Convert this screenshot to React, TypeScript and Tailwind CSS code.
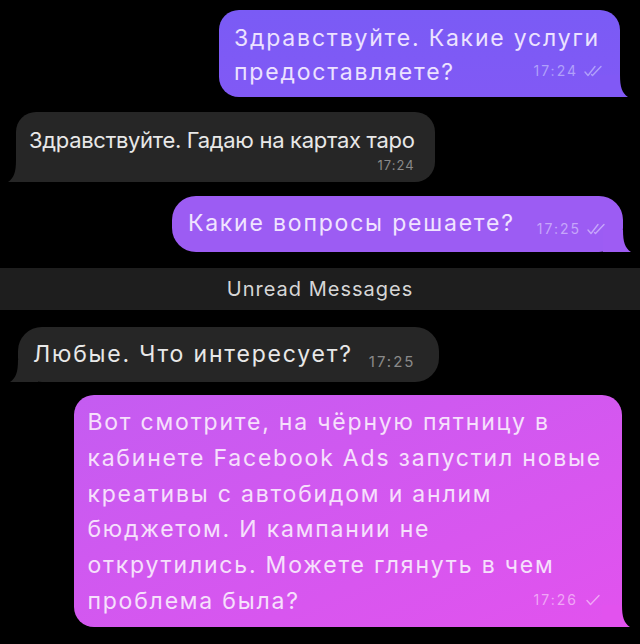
import React from 'react';

const font = { fontFamily: 'Inter, "Noto Sans", sans-serif' };

function Checks({ double }: { double?: boolean }) {
  return (
    <svg width="20" height="12" viewBox="0 0 20 12" fill="none" className="ml-1.5">
      {double ? (
        <>
          <path d="M1 7l3 3.5L11 1.5" stroke="currentColor" strokeWidth="1.4" strokeLinecap="round" strokeLinejoin="round" />
          <path d="M7.5 9.5l1 1L17 1.5" stroke="currentColor" strokeWidth="1.4" strokeLinecap="round" strokeLinejoin="round" />
        </>
      ) : (
        <path d="M3 6.5l3.5 4L15 1.5" stroke="currentColor" strokeWidth="1.4" strokeLinecap="round" strokeLinejoin="round" />
      )}
    </svg>
  );
}

// little swoosh at the bottom corner of a bubble
function Tail({ side, color }: { side: 'left' | 'right'; color: string }) {
  if (side === 'right') {
    return (
      <svg width="28" height="22" viewBox="0 0 28 22" className="absolute -right-[8px] bottom-0">
        <path d="M0 0H20C20 12 22 18 28 22H0Z" fill={color} />
      </svg>
    );
  }
  return (
    <svg width="28" height="22" viewBox="0 0 28 22" className="absolute -left-[8px] bottom-0">
      <path d="M28 0H8C8 12 6 18 0 22H28Z" fill={color} />
    </svg>
  );
}

export default function App() {
  return (
    <div className="w-[640px] h-[644px] bg-black overflow-hidden flex flex-col pt-[10px]" style={font}>
      {/* 1 outgoing */}
      <div className="flex justify-end pr-[20px]">
        <div className="relative rounded-[20px] bg-gradient-to-b from-[#7a5bf5] to-[#8159f5] pl-[15px] pr-[20px] pt-[11px] pb-[8px] text-[23px] tracking-[1.8px] leading-[34px] text-[#ece2ff] whitespace-nowrap">
          <Tail side="right" color="#8159f5" />
          <div className="relative">
            Здравствуйте. Какие услуги
            <br />
            предоставляете?
          </div>
          <div className="absolute right-[16px] bottom-[9px] flex items-center text-[14px] tracking-[2px] text-[#b0a0fa]">
            17:24
            <Checks double />
          </div>
        </div>
      </div>

      {/* 2 incoming */}
      <div className="flex justify-start pl-[16px] mt-[15px]">
        <div className="relative rounded-[20px] bg-[#262626] pl-[13px] pr-[20px] pt-[11px] pb-[9px] text-[#e8e8e8] whitespace-nowrap">
          <Tail side="left" color="#262626" />
          <div className="relative text-[22px] tracking-[-0.3px] leading-[34px]">Здравствуйте. Гадаю на картах таро</div>
          <div className="relative text-right text-[13px] tracking-[1px] leading-[16px] text-[#8a8a8a]">17:24</div>
        </div>
      </div>

      {/* 3 outgoing */}
      <div className="flex justify-end pr-[17px] mt-[14px]">
        <div className="relative rounded-[24px] bg-[#9c5cf3] pl-[16px] pr-[16px] pt-[10px] pb-[12px] text-[#f0e4ff] whitespace-nowrap flex items-end">
          <Tail side="right" color="#9e5cf3" />
          <div className="relative text-[23px] tracking-[1.8px] leading-[34px]">Какие вопросы решаете?</div>
          <div className="relative ml-[22px] mb-[1px] flex items-center text-[14px] tracking-[2px] text-[#c6a6fa]">
            17:25
            <Checks double />
          </div>
        </div>
      </div>

      {/* unread */}
      <div className="mt-[16px] h-[42px] bg-[#1e1e1e] flex items-center justify-center text-[20px] tracking-[1px] text-[#d6d6d6]">
        Unread Messages
      </div>

      {/* 4 incoming */}
      <div className="flex justify-start pl-[18px] mt-[17px]">
        <div className="relative rounded-[24px] bg-[#262626] pl-[15px] pr-[24px] pt-[10px] pb-[11px] text-[#e8e8e8] whitespace-nowrap flex items-end">
          <Tail side="left" color="#262626" />
          <div className="relative text-[23px] tracking-[1.8px] leading-[34px]">Любые. Что интересует?</div>
          <div className="relative ml-[16px] -mb-[2px] text-[15px] tracking-[2px] text-[#8a8a8a]">17:25</div>
        </div>
      </div>

      {/* 5 outgoing */}
      <div className="flex justify-end pr-[18px] mt-[13px]">
        <div className="relative rounded-[20px] bg-gradient-to-br from-[#c45cf1] to-[#e252ee] pl-[13px] pr-[20px] pt-[10px] pb-[7px] text-[23px] tracking-[1.8px] leading-[35.8px] text-[#f6e0fc] whitespace-nowrap">
          <Tail side="right" color="#e252ee" />
          <div className="relative">
            Вот смотрите, на чёрную пятницу в
            <br />
            кабинете Facebook Ads запустил новые
            <br />
            креативы с автобидом и анлим
            <br />
            бюджетом. И кампании не
            <br />
            открутились. Можете глянуть в чем
            <br />
            проблема была?
          </div>
          <div className="absolute right-[18px] bottom-[9px] flex items-center text-[14px] tracking-[2px] text-[#f0a6f6]">
            17:26
            <Checks />
          </div>
        </div>
      </div>
    </div>
  );
}
